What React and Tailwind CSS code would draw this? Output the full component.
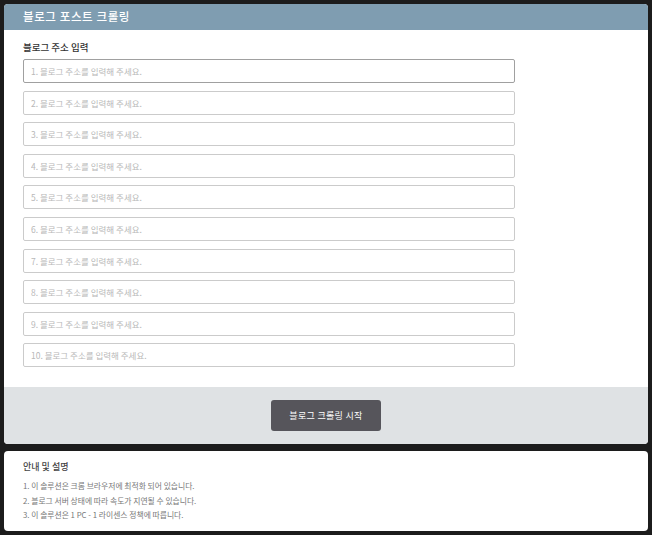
const inputs = Array.from({ length: 10 }, (_, i) => `${i + 1}. 블로그 주소를 입력해 주세요.`);

const notes = [
  '1. 이 솔루션은 크롬 브라우저에 최적화 되어 있습니다.',
  '2. 블로그 서버 상태에 따라 속도가 지연될 수 있습니다.',
  '3. 이 솔루션은 1 PC - 1 라이센스 정책에 따릅니다.',
];

export default function App() {
  return (
    <div
      className="w-[652px] h-[535px] bg-[#1c1c1c] p-[4px] flex flex-col gap-[7px] overflow-hidden"
      style={{ fontFamily: '"Noto Sans CJK KR", "Noto Sans", sans-serif' }}
    >
      {/* main card */}
      <section className="bg-white rounded-[4px] overflow-hidden">
        <header className="h-[26px] bg-[#7f9db1] flex items-center px-[19px]">
          <h1 className="text-[11.5px] font-medium text-white tracking-[0.6px]">블로그 포스트 크롤링</h1>
        </header>

        <div className="pl-[19px] pt-[11px] pb-[20px]">
          <p className="text-[9.5px] font-medium text-[#333] leading-[13px] mb-[5px]">블로그 주소 입력</p>
          <div className="flex flex-col gap-[7.6px]">
            {inputs.map((ph, i) => (
              <input
                key={i}
                type="text"
                placeholder={ph}
                className={`w-[492px] h-[24px] px-[7px] text-[8.5px] rounded-[2px] border outline-none placeholder:text-[#b8b8b8] ${
                  i === 0 ? 'border-[#a0a0a0]' : 'border-[#cbcbcb]'
                }`}
              />
            ))}
          </div>
        </div>

        <div className="bg-[#dfe2e4] h-[57px] flex items-center justify-center">
          <button className="w-[110px] h-[31px] bg-[#56555b] rounded-[3px] text-white text-[9px] tracking-[0.3px]">
            블로그 크롤링 시작
          </button>
        </div>
      </section>

      {/* info card */}
      <section className="bg-white rounded-[4px] h-[80px] px-[19px] pt-[9px]">
        <h2 className="text-[9px] font-medium text-[#444] leading-[13px] mb-[6px]">안내 및 설명</h2>
        <ul className="flex flex-col gap-[1px]">
          {notes.map((n, i) => (
            <li key={i} className="text-[7.8px] text-[#777] leading-[13.5px]">{n}</li>
          ))}
        </ul>
      </section>
    </div>
  );
}
